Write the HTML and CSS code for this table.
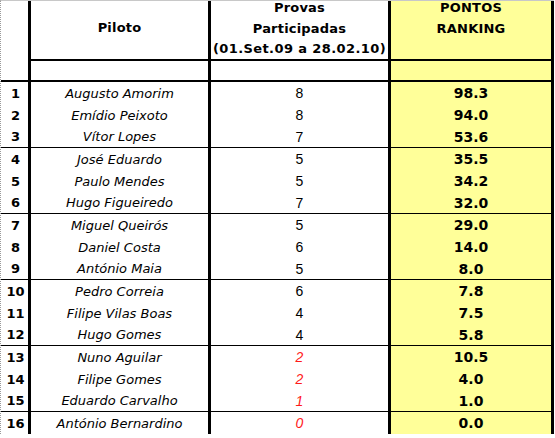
FILE: index.html
```html
<!DOCTYPE html>
<html lang="pt">
<head>
<meta charset="utf-8">
<title>Ranking Pilotos</title>
<link rel="stylesheet" href="styles.css">
</head>
<body>
<div class="sheet">
  <div class="c c1 hd-first"></div>
  <div class="c c2 hd"><div class="hl piloto">Piloto</div></div>
  <div class="c c3 hd"><div class="hl">Provas<br>Participadas<br><span class="period">(01.Set.09 a 28.02.10)</span></div></div>
  <div class="c c4 hd"><div class="hl">PONTOS<br>RANKING</div></div>

  <div class="c c1 blank"></div>
  <div class="c c2 blank"></div>
  <div class="c c3 blank"></div>
  <div class="c c4 blank"></div>

  <div class="c c1 r">1</div><div class="c c2 r">Augusto Amorim</div><div class="c c3 r">8</div><div class="c c4 r">98.3</div>
  <div class="c c1 r">2</div><div class="c c2 r">Emídio Peixoto</div><div class="c c3 r">8</div><div class="c c4 r">94.0</div>
  <div class="c c1 r end">3</div><div class="c c2 r end">Vítor Lopes</div><div class="c c3 r end">7</div><div class="c c4 r end">53.6</div>

  <div class="c c1 r">4</div><div class="c c2 r">José Eduardo</div><div class="c c3 r">5</div><div class="c c4 r">35.5</div>
  <div class="c c1 r">5</div><div class="c c2 r">Paulo Mendes</div><div class="c c3 r">5</div><div class="c c4 r">34.2</div>
  <div class="c c1 r end">6</div><div class="c c2 r end">Hugo Figueiredo</div><div class="c c3 r end">7</div><div class="c c4 r end">32.0</div>

  <div class="c c1 r">7</div><div class="c c2 r">Miguel Queirós</div><div class="c c3 r">5</div><div class="c c4 r">29.0</div>
  <div class="c c1 r">8</div><div class="c c2 r">Daniel Costa</div><div class="c c3 r">6</div><div class="c c4 r">14.0</div>
  <div class="c c1 r end">9</div><div class="c c2 r end">António Maia</div><div class="c c3 r end">5</div><div class="c c4 r end">8.0</div>

  <div class="c c1 r">10</div><div class="c c2 r">Pedro Correia</div><div class="c c3 r">6</div><div class="c c4 r">7.8</div>
  <div class="c c1 r">11</div><div class="c c2 r">Filipe Vilas Boas</div><div class="c c3 r">4</div><div class="c c4 r">7.5</div>
  <div class="c c1 r end">12</div><div class="c c2 r end">Hugo Gomes</div><div class="c c3 r end">4</div><div class="c c4 r end">5.8</div>

  <div class="c c1 r">13</div><div class="c c2 r">Nuno Aguilar</div><div class="c c3 r low">2</div><div class="c c4 r">10.5</div>
  <div class="c c1 r">14</div><div class="c c2 r">Filipe Gomes</div><div class="c c3 r low">2</div><div class="c c4 r">4.0</div>
  <div class="c c1 r end">15</div><div class="c c2 r end">Eduardo Carvalho</div><div class="c c3 r end low">1</div><div class="c c4 r end">1.0</div>

  <div class="c c1 r">16</div><div class="c c2 r">António Bernardino</div><div class="c c3 r low">0</div><div class="c c4 r">0.0</div>
</div>
</body>
</html>
```

FILE: styles.css
```css
html, body {
  margin: 0;
  padding: 0;
  background: #ffffff;
}

.sheet {
  display: grid;
  grid-template-columns: 30px 180px 180px 163px;
  grid-template-rows: 60px 21px;
  grid-auto-rows: 22px;
  width: 553px;
  border-top: 1px solid #c8c8c8;
  border-left: 1px dotted #9a9a9a;
  font-family: "DejaVu Sans", Verdana, sans-serif;
  color: #000000;
}

.c {
  box-sizing: border-box;
  border-right: 3px solid #000000;
  overflow: visible;
  white-space: nowrap;
}

.c4 {
  background: #ffff99;
}

.hd {
  border-bottom: 2px solid #000000;
  text-align: center;
  font-weight: bold;
  font-size: 13px;
}

.hl {
  line-height: 20.5px;
  margin-top: -3px;
  letter-spacing: 0.2px;
}

.hl.piloto {
  margin-top: 17px;
}

.period {
  letter-spacing: 0.4px;
}

.blank {
  border-bottom: 2px solid #000000;
}

.r {
  display: flex;
  align-items: center;
  justify-content: center;
  font-size: 13px;
}

.r.end {
  border-bottom: 1px solid #000000;
}

.c1.r {
  font-weight: bold;
  padding-left: 2px;
}

.c2.r {
  font-style: italic;
}

.c3.r {
  font-family: "Liberation Sans", Arial, sans-serif;
  font-size: 14px;
}

.c3.low {
  color: #ff1a1a;
  font-style: italic;
}

.c4.r {
  font-weight: bold;
  font-size: 14px;
}
```
